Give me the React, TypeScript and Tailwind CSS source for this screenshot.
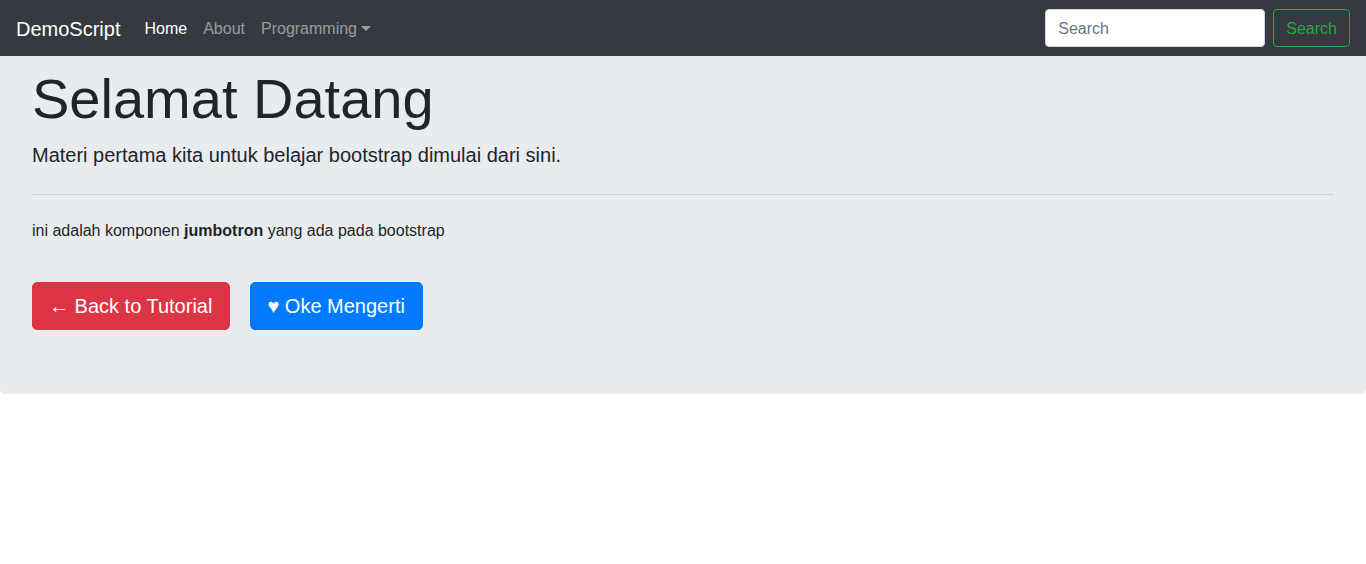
import { useState } from "react";

function Navbar() {
  const [query, setQuery] = useState("");
  return (
    <nav className="flex h-14 items-center bg-[#343a40] px-4">
      <a href="#" className="mr-4 pt-[6px] pb-[4px] text-xl leading-[30px] text-white">
        DemoScript
      </a>
      <ul className="flex items-center">
        <li>
          <a href="#" className="block px-2 pt-[9px] pb-[7px] text-base leading-6 text-white">
            Home
          </a>
        </li>
        <li>
          <a href="#" className="block px-2 pt-[9px] pb-[7px] text-base leading-6 text-white/50">
            About
          </a>
        </li>
        <li>
          <a href="#" className="flex items-center px-2 pt-[9px] pb-[7px] text-base leading-6 text-white/50">
            Programming
            <span className="ml-[4px] mb-[2px] inline-block h-0 w-0 border-x-[5px] border-t-[5px] border-x-transparent border-t-white/50" />
          </a>
        </li>
      </ul>
      {/* Search form */}
      <form className="ml-auto flex items-center" onSubmit={(e) => e.preventDefault()}>
        <input
          type="search"
          value={query}
          onChange={(e) => setQuery(e.target.value)}
          placeholder="Search"
          className="mr-2 h-[38px] w-[220px] rounded border border-[#ced4da] bg-white px-3 pt-px text-base text-[#495057] placeholder:text-[#6c757d] outline-none"
        />
        <button
          type="submit"
          className="h-[38px] rounded border border-[#28a745] px-3 pt-px text-base text-[#28a745]"
        >
          Search
        </button>
      </form>
    </nav>
  );
}

function Jumbotron() {
  return (
    <div className="rounded-b-[5px] bg-[#e9ecef] px-8 pt-[9px] pb-16">
      <h1 className="mb-2 text-[56px] font-light leading-[1.2]">Selamat Datang</h1>
      <p className="mb-4 text-xl font-light leading-[30px]">
        Materi pertama kita untuk belajar bootstrap dimulai dari sini.
      </p>
      <hr className="my-6 border-t border-black/10" />
      <p className="text-base leading-6">
        ini adalah komponen <b>jumbotron</b> yang ada pada bootstrap
      </p>
      <div className="mt-[39px] flex gap-5">
        <a href="#" className="rounded-[5px] border border-[#dc3545] bg-[#dc3545] pl-4 pr-[17px] py-2 text-xl leading-[30px] text-white">
          ← Back to Tutorial
        </a>
        <a href="#" className="rounded-[5px] border border-[#007bff] bg-[#007bff] pl-4 pr-[17px] py-2 text-xl leading-[30px] text-white">
          ♥ Oke Mengerti
        </a>
      </div>
    </div>
  );
}

function App() {
  return (
    <div className="min-h-screen bg-white font-['Liberation_Sans',Arial,sans-serif] text-[#212529]">
      <Navbar />
      <Jumbotron />
    </div>
  );
}

export default App;
